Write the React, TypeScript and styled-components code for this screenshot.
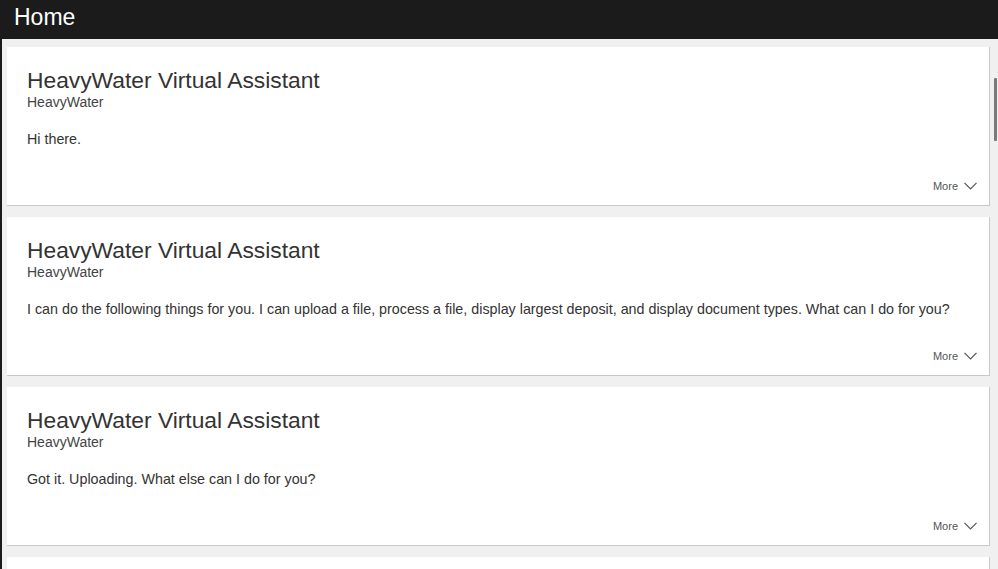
import React from "react";
import styled, { createGlobalStyle } from "styled-components";

const Global = createGlobalStyle`
  html, body { margin: 0; padding: 0; background: #f0f0f0; overflow: hidden; }
  body { font-family: "Liberation Sans", Arial, sans-serif; }
`;

const Page = styled.div`
  display: flex;
  flex-direction: column;
  height: 569px;
  width: 998px;
  overflow: hidden;
`;

const Header = styled.header`
  height: 39px;
  background: #1b1b1b;
  color: #fff;
  display: flex;
  align-items: center;
  padding-left: 14px;
  flex-shrink: 0;
`;

const HeaderTitle = styled.h1`
  margin: 0;
  font-size: 23px;
  font-weight: 400;
  line-height: 1;
  padding-bottom: 4px;
`;

const Main = styled.div`
  flex: 1;
  display: flex;
  border-left: 2px solid #1b1b1b;
  background: #f0f0f0;
  min-height: 0;
  overflow: hidden;
`;

const Feed = styled.div`
  flex: 1;
  display: flex;
  flex-direction: column;
  gap: 11px;
  padding: 8px 4px 0 5px;
`;

const ScrollTrack = styled.div`
  width: 4px;
  padding-top: 39px;
  display: flex;
  justify-content: flex-start;
`;

const Thumb = styled.div`
  width: 3px;
  height: 63px;
  background: #7a7a7a;
  border-radius: 1px;
`;

const Card = styled.article`
  background: #fff;
  border-right: 1px solid #c9c9c9;
  border-bottom: 1px solid #c9c9c9;
  height: 159px;
  padding: 20px 12px 0 20px;
  box-sizing: border-box;
  display: flex;
  flex-direction: column;
  flex-shrink: 0;
  color: #333;
`;

const Title = styled.h2`
  margin: 0;
  font-size: 22.8px;
  font-weight: 400;
  line-height: 26px;
  color: #333;
`;

const Subtitle = styled.div`
  font-size: 14px;
  line-height: 18px;
  color: #444;
`;

const Body = styled.p`
  margin: 19px 0 0;
  font-size: 14.3px;
  line-height: 18px;
  color: #333;
  white-space: nowrap;
`;

const Footer = styled.div`
  margin-top: auto;
  display: flex;
  justify-content: flex-end;
  align-items: center;
  gap: 6px;
  padding-bottom: 13px;
  color: #555;
  font-size: 11px;
`;

const Chevron = () => (
  <svg width="13" height="8" viewBox="0 0 13 8" fill="none">
    <polyline points="0.5,0.8 6.5,6.8 12.5,0.8" stroke="#555" strokeWidth="1.2" />
  </svg>
);

const messages = [
  "Hi there.",
  "I can do the following things for you. I can upload a file, process a file, display largest deposit, and display document types. What can I do for you?",
  "Got it. Uploading. What else can I do for you?",
  "",
];

export default function App() {
  return (
    <Page>
      <Global />
      <Header>
        <HeaderTitle>Home</HeaderTitle>
      </Header>
      <Main>
        <Feed>
          {messages.map((m, i) => (
            <Card key={i}>
              <Title>HeavyWater Virtual Assistant</Title>
              <Subtitle>HeavyWater</Subtitle>
              <Body>{m}</Body>
              <Footer>
                <span>More</span>
                <Chevron />
              </Footer>
            </Card>
          ))}
        </Feed>
        <ScrollTrack>
          <Thumb />
        </ScrollTrack>
      </Main>
    </Page>
  );
}
